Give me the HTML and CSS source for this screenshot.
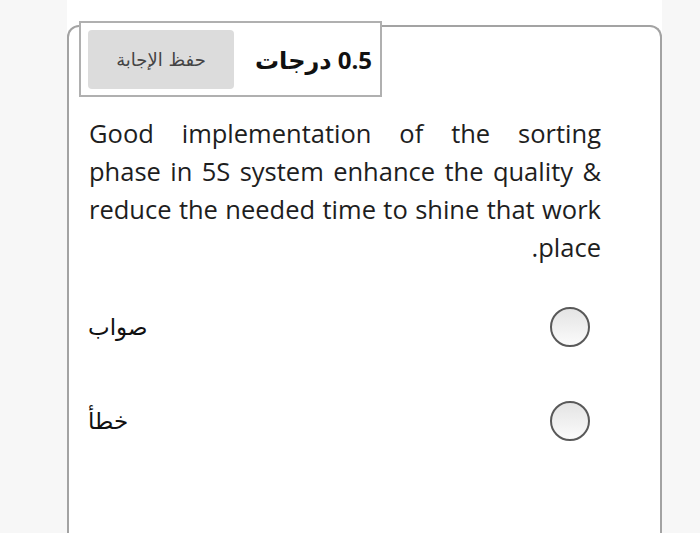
FILE: index.html
```html
<!DOCTYPE html>
<html lang="ar">
  <head>
    <meta charset="UTF-8" />
    <meta name="viewport" content="width=device-width, initial-scale=1.0" />
    <title>سؤال</title>
    <link rel="stylesheet" href="styles.css">
  </head>
  <body>
    <div class="page">
      <div class="question-card">
        <div class="question-head">
          <button class="save-btn" type="button">حفظ الإجابة</button>
          <span class="grade" dir="rtl">0.5 درجات</span>
        </div>

        <p class="question-text" dir="rtl">Good implementation of the sorting<br>phase in 5S system enhance the quality &amp;&lrm;<br>reduce the needed time to shine that work<br>place.</p>

        <div class="answers">
          <label class="answer">
            <span class="radio"></span>
            <span class="answer-label">صواب</span>
          </label>
          <label class="answer">
            <span class="radio"></span>
            <span class="answer-label">خطأ</span>
          </label>
        </div>
      </div>
    </div>
  </body>
</html>
```

FILE: styles.css
```css
body {
  margin: 0;
  background-color: #f7f7f7;
  font-family: "Open Sans", "DejaVu Sans", sans-serif;
  color: #222;
}
.page {
  width: 595px;
  height: 533px;
  margin-left: 67px;
  padding-top: 25px;
  box-sizing: border-box;
  background-color: #fff;
  overflow: hidden;
}
.question-card {
  height: 520px;
  border: 2px solid #a3a3a3;
  border-bottom: none;
  border-radius: 12px 12px 0 0;
}
.question-head {
  display: inline-flex;
  align-items: center;
  margin: -6px 0 0 10px;
  padding: 7px 8px 6px 7px;
  border: 2px solid #b0b0b0;
  background-color: #fff;
}
.save-btn {
  width: 146px;
  height: 59px;
  padding: 0;
  border: none;
  border-radius: 4px;
  background-color: #dcdcdc;
  color: #444;
  font-family: "DejaVu Sans", sans-serif;
  font-size: 18px;
}
.grade {
  margin-left: 21px;
  font-size: 24px;
  font-weight: bold;
  color: #111;
}
.question-text {
  width: 512px;
  margin: 17px 0 0 20px;
  font-size: 25.5px;
  line-height: 38px;
  text-align: justify;
  text-align-last: justify;
  color: #1e1e1e;
}
.answers {
  margin: 31px 0 0 19px;
  width: 502px;
}
.answer {
  display: flex;
  direction: rtl;
  justify-content: space-between;
  align-items: center;
  height: 60px;
  margin-bottom: 34px;
}
.radio {
  width: 36px;
  height: 36px;
  border: 2px solid #595959;
  border-radius: 50%;
  background: linear-gradient(to bottom, #e4e4e4, #fbfbfb);
}
.answer-label {
  font-family: "DejaVu Sans", sans-serif;
  font-size: 23px;
  color: #111;
}
```
